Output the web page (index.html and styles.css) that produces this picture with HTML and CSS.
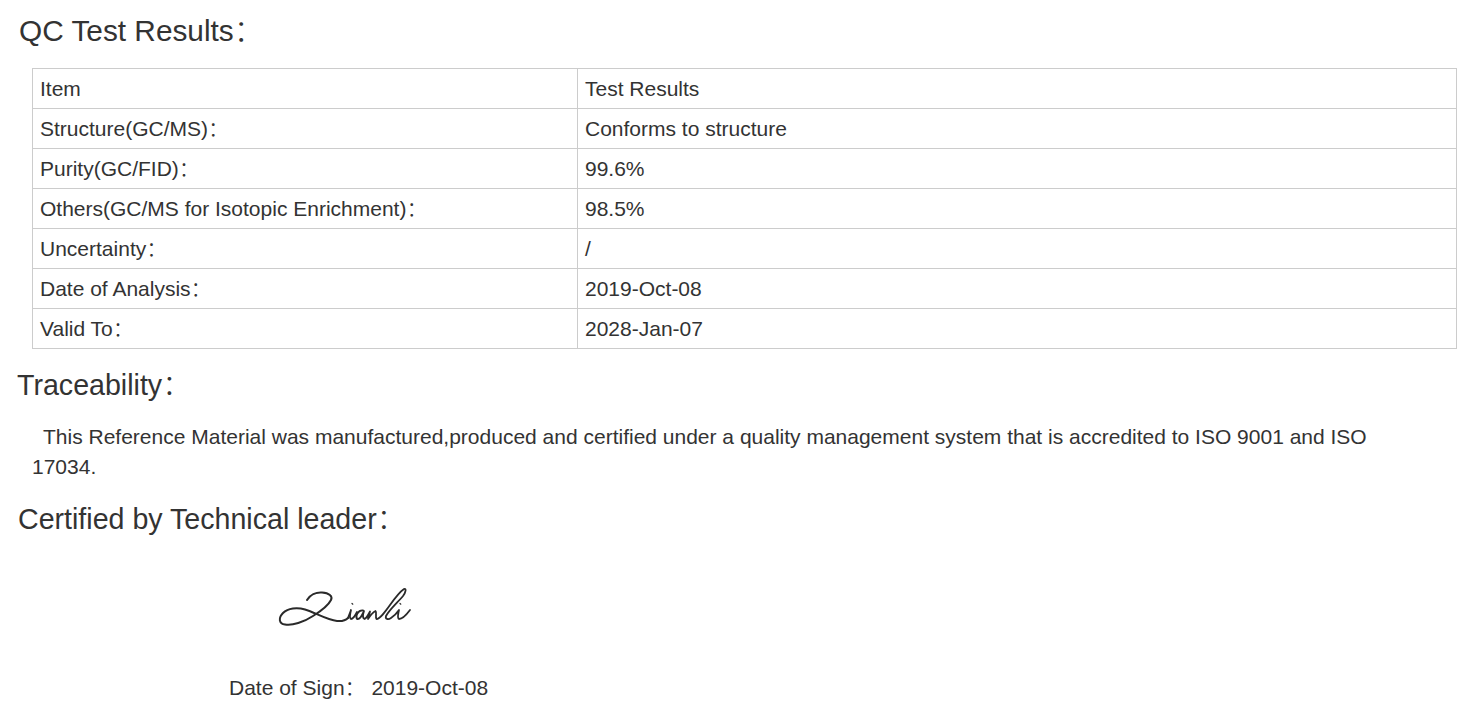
FILE: index.html
```html
<!DOCTYPE html>
<html lang="en">
<head>
<meta charset="utf-8">
<title>QC Test Results</title>
<link rel="stylesheet" href="styles.css">
</head>
<body>
<h2 class="title title-first">QC Test Results：</h2>
<table class="results">
<colgroup><col class="col-item"><col></colgroup>
<tr><td>Item</td><td>Test Results</td></tr>
<tr><td>Structure(GC/MS)：</td><td>Conforms to structure</td></tr>
<tr><td>Purity(GC/FID)：</td><td>99.6%</td></tr>
<tr><td>Others(GC/MS for Isotopic Enrichment)：</td><td>98.5%</td></tr>
<tr><td>Uncertainty：</td><td>/</td></tr>
<tr><td>Date of Analysis：</td><td>2019-Oct-08</td></tr>
<tr><td>Valid To：</td><td>2028-Jan-07</td></tr>
</table>
<h2 class="title title-trace">Traceability：</h2>
<p class="statement">This Reference Material was manufactured,produced and certified under a quality management system that is accredited to ISO 9001 and ISO 17034.</p>
<h2 class="title title-cert">Certified by Technical leader：</h2>
<svg class="signature" width="136" height="44" viewBox="0 0 136 44" fill="none" stroke="#2a2a2a" stroke-linecap="round" stroke-linejoin="round" aria-label="Signature">
<path stroke-width="2" d="M30 15C33 10 39 7 45 7.500C52 8 56 11 54 15C51 21 44 26 36 31C27 37 15 41 8 39.500C2 39 1 33 6 28C11 23 20 22 28 24.500C38 27.500 50 35 60 36C65 36.500 69 35 71 33"/>
<path stroke-width="1.800" d="M71 33C72 30 73 28 74 25C73 29 72 33 74 34C76 34 78 31 80 27"/>
<path stroke-width="1.200" d="M75 18.500L75.800 19.200"/>
<path stroke-width="1.800" d="M86 25.500C81 25 78 31 80 34C83 35 85 30 87 26C86 29 85.500 33 87.500 34C90 33 91 30 93 26.500C92.500 29 91.500 32 91 34C93 31 96 27 98.500 26C100 27 98 32 99.500 34C103 34 108 27 113 20C118 13 124 6 127 4C129.500 3 129 7 126 11C121 17 112 25 109 31C108 34 111 35 114 33C117 31 120 28 122 25C121 29 120 33 122 34C125 34 130 29 133 25"/>
<path stroke-width="1.200" d="M123 18.500L123.800 19.200"/>
</svg>
<p class="sign-date">Date of Sign：&nbsp;2019-Oct-08</p>
</body>
</html>
```

FILE: styles.css
```css
html, body {
  margin: 0;
  padding: 0;
  background: #fff;
}

body {
  color: #333;
  font-family: "Liberation Sans", "Noto Sans CJK SC", sans-serif;
  font-size: 21px;
  font-weight: 300;
}

.title {
  margin: 0;
  font-weight: 300;
  font-size: 28.600px;
  line-height: 40px;
}

.title-first {
  padding: 11px 0 0 19px;
  font-size: 29.800px;
}

.title-trace {
  margin-top: 16px;
  padding-left: 17px;
}

.title-cert {
  margin-top: 17px;
  padding-left: 18px;
}

.results {
  border-collapse: collapse;
  table-layout: fixed;
  width: 1425px;
  margin: 17px 0 0 32px;
}

.col-item {
  width: 545px;
}

.results td {
  height: 39px;
  padding: 0 7px;
  border: 1px solid #ccc;
  line-height: 28px;
}

.statement {
  margin: 17px 0 0 32px;
  width: 1380px;
  line-height: 30px;
  text-indent: 11px;
}

.signature {
  display: block;
  margin: 46px 0 0 277px;
}

.sign-date {
  margin: 44px 0 0 229px;
  line-height: 30px;
}
```
